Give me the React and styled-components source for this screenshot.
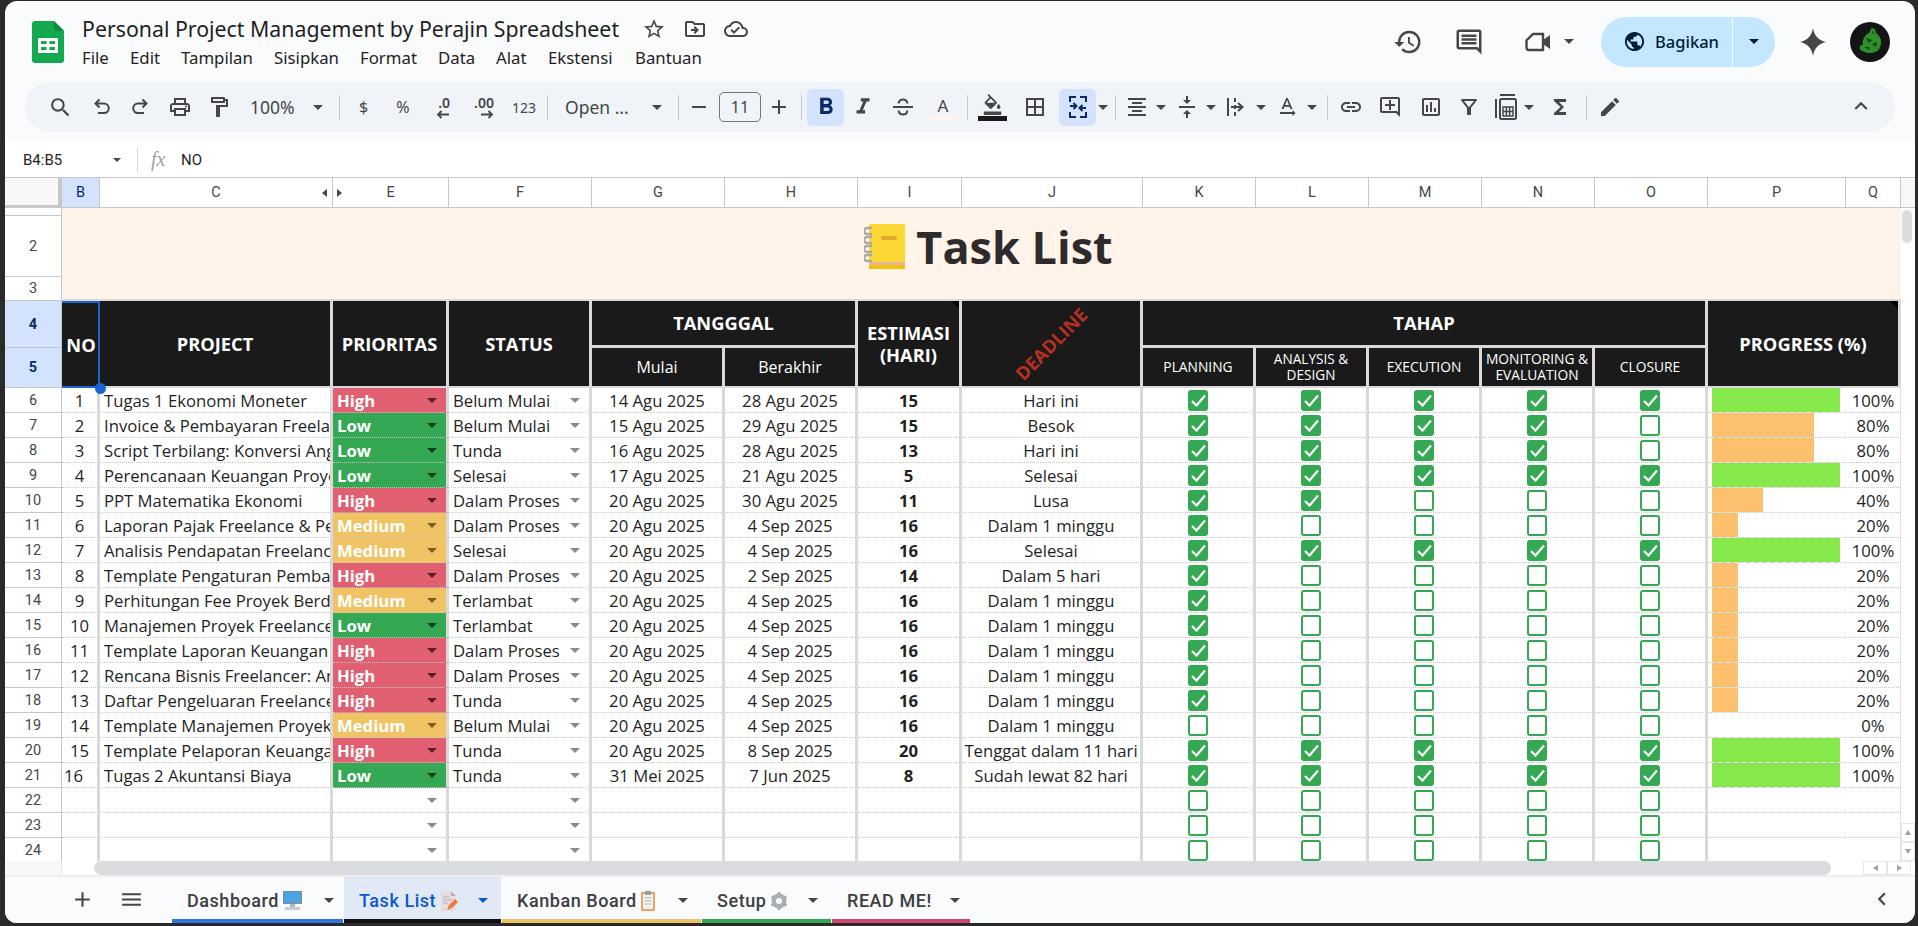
import React from "react";
import styled, {createGlobalStyle} from "styled-components";
import {
    MdSearch, MdOutlineLocalPrintshop, MdOutlineFormatPaint,
    MdRemove, MdAdd, MdFormatBold, MdFormatItalic, MdFormatColorFill, MdBorderAll,
    MdFormatAlignCenter, MdVerticalAlignCenter, MdTextRotationNone, MdLink, MdOutlineAddComment,
    MdOutlineInsertChart, MdOutlineFilterAlt, MdFunctions, MdEdit, MdKeyboardArrowUp, MdHistory,
    MdOutlineComment, MdPublic, MdStarBorder, MdOutlineDriveFileMove,
    MdOutlineCloudDone, MdMenu, MdChevronLeft
} from "react-icons/md";

const GlobalStyle = createGlobalStyle`
  html, body {
    margin: 0;
    padding: 0;
    background: #2a2a2a;
    overflow: hidden;
  }
  * {
    box-sizing: border-box;
  }
`;

const Frame = styled.div`
  width: 1918px;
  height: 926px;
  padding: 1px 3px 3px 5px;
  background: #2a2a2a;
`;

const Window = styled.div`
  width: 1910px;
  height: 922px;
  display: flex;
  flex-direction: column;
  background: #f9fbfd;
  border-radius: 12px;
  overflow: hidden;
  font-family: "Open Sans", sans-serif;
`;

const Header = styled.header`
  height: 81px;
  flex: none;
  display: flex;
  align-items: center;
  padding: 0 25px 0 27px;
`;

const TitleBlock = styled.div`
  margin-left: 18px;
  display: flex;
  flex-direction: column;
  gap: 2px;
`;

const DocRow = styled.div`
  display: flex;
  align-items: center;
  height: 30px;
`;

const DocName = styled.div`
  font-size: 21.3px;
  color: #1f1f1f;
  font-family: "Noto Sans", sans-serif;
  width: 551px;
  white-space: nowrap;
`;

const DocIcon = styled.span`
  width: 41px;
  display: flex;
  justify-content: center;
  font-size: 24px;
  color: #444746;
`;

const Menu = styled.nav`
  display: flex;
  height: 24px;
  align-items: center;
`;

const MenuItem = styled.span`
  font-family: "Noto Sans", sans-serif;
  font-size: 16.8px;
  color: #1f1f1f;
  width: ${({$w}) => $w}px;
  white-space: nowrap;
`;

const HeaderRight = styled.div`
  margin-left: auto;
  display: flex;
  align-items: center;
`;

const HeadIcon = styled.span`
  width: ${({$w}) => $w}px;
  display: flex;
  justify-content: center;
  font-size: 30px;
  color: #444746;
`;

const MeetGroup = styled.div`
  width: 74px;
  margin-right: 27px;
  padding-left: 25px;
  display: flex;
  align-items: center;
  gap: 13px;
`;

const Arrow = styled.span`
  flex: none;
  width: 0;
  height: 0;
  border-left: ${({$size}) => $size || 5}px solid transparent;
  border-right: ${({$size}) => $size || 5}px solid transparent;
  border-top: ${({$size}) => $size || 5}px solid ${({$color}) => $color || "#444746"};
`;

const Share = styled.div`
  width: 174px;
  height: 50px;
  display: flex;
  background: #c2e7ff;
  border-radius: 25px;
  color: #001d35;
`;

const ShareMain = styled.div`
  width: 132px;
  display: flex;
  align-items: center;
  gap: 9px;
  padding-left: 22px;
  font-family: "Noto Sans", sans-serif;
  font-size: 16.5px;
  font-weight: 500;
  border-right: 1.5px solid #f9fbfd;
  svg {
    font-size: 23px;
    flex: none;
  }
`;

const ShareDrop = styled.div`
  flex: 1;
  display: flex;
  align-items: center;
  justify-content: center;
`;

const Sparkle = styled.span`
  width: 75px;
  display: flex;
  justify-content: center;
`;

const Toolbar = styled.div`
  height: 50px;
  flex: none;
  margin: 0 20px;
  padding: 0 21px 0 12px;
  display: flex;
  align-items: center;
  background: #f0f4f9;
  border-radius: 25px;
`;

const Tool = styled.div`
  width: ${({$w}) => $w}px;
  height: 37px;
  flex: none;
  display: flex;
  align-items: center;
  justify-content: center;
  font-size: ${({$icon}) => $icon || 24}px;
  color: ${({$active}) => ($active ? "#0b2a6b" : "#444746")};
  background: ${({$active}) => ($active ? "#d3e3fd" : "transparent")};
  border-radius: ${({$active}) => ($active ? "5px" : "0")};
  position: relative;
`;

const ToolText = styled.span`
  font-family: "Noto Sans", sans-serif;
  font-size: ${({$size}) => $size || 17.5}px;
  color: #444746;
  white-space: nowrap;
`;

const TextTool = styled(Tool)`
  justify-content: space-between;
  padding: 0 11px 0 12px;
`;

const Sep = styled.span`
  width: 1px;
  height: 25px;
  flex: none;
  background: #c7c7c7;
  margin: 0 5px 0 ${({$ml}) => $ml || 5}px;
`;

const FontSize = styled.div`
  width: 42px;
  height: 30px;
  margin-left: 5px;
  flex: none;
  border: 1px solid #747775;
  border-radius: 5px;
  display: flex;
  align-items: center;
  justify-content: center;
  font-family: "Noto Sans", sans-serif;
  font-size: 16px;
  color: #444746;
`;

const ColorStack = styled.div`
  display: flex;
  flex-direction: column;
  align-items: center;
  font-size: 21px;
  svg {
    margin-bottom: 1px;
  }
`;

const ColorBar = styled.span`
  width: 29px;
  height: ${({$h}) => $h}px;
  background: ${({$color}) => $color};
`;

const LetterA = styled.span`
  font-family: "Noto Sans", sans-serif;
  font-size: 17px;
  line-height: 21px;
  color: #444746;
`;

const DecimalTool = styled.div`
  display: flex;
  flex-direction: column;
  align-items: flex-end;
  font-family: "Noto Sans", sans-serif;
  font-weight: 600;
  font-size: 14px;
  line-height: 14px;
  color: #444746;
`;

const FormulaBar = styled.div`
  height: 36px;
  flex: none;
  margin-top: 10px;
  display: flex;
  align-items: center;
  background: #fff;
  border-bottom: 1px solid #c7c7c7;
  padding-left: 18px;
`;

const NameBox = styled.div`
  width: 115px;
  padding-right: 16px;
  display: flex;
  align-items: center;
  justify-content: space-between;
  font-family: "Roboto", sans-serif;
  font-size: 15px;
  color: #1f1f1f;
  border-right: 1px solid #dadce0;
  height: 26px;
`;

const Fx = styled.span`
  margin-left: 13px;
  width: 30px;
  font-family: "Liberation Serif", serif;
  font-style: italic;
  font-size: 20px;
  color: #a0a0a0;
`;

const FormulaText = styled.span`
  font-family: "Roboto", sans-serif;
  font-size: 15px;
  color: #1f1f1f;
`;

const SheetArea = styled.div`
  height: 683px;
  flex: none;
  display: flex;
  background: #fff;
  overflow: hidden;
`;

const Sheet = styled.div`
  width: 1896px;
  height: 683px;
  flex: none;
  overflow: hidden;
  display: grid;
  grid-template-columns: 57px 38px 233px 116px 143px 133px 133px 104px 181px repeat(5, 113px) 138px 55px;
  grid-template-rows: 30px 8px 61px 24px 47px 40px repeat(19, 25px);
  color: #1f1f1f;
`;

const Corner = styled.div`
  background: #f8f8f8;
  border-right: 4px solid #c7c7c7;
  border-bottom: 3px solid #c7c7c7;
`;

const ColHead = styled.div`
  position: relative;
  display: flex;
  align-items: center;
  justify-content: center;
  font-family: "Roboto", sans-serif;
  font-size: 14.5px;
  color: ${({$active}) => ($active ? "#0b2a6b" : "#444746")};
  background: ${({$active}) => ($active ? "#d3e3fd" : "#fff")};
  border-right: 1px solid #c7c7c7;
  border-bottom: 1px solid #c7c7c7;
`;

const HiddenMark = styled.span`
  position: absolute;
  top: 50%;
  margin-top: -4px;
  ${({$side}) => ($side === "left" ? "right: 5px;" : "left: 4px;")}
  width: 0;
  height: 0;
  border-top: 4px solid transparent;
  border-bottom: 4px solid transparent;
  ${({$side}) => ($side === "left" ? "border-right: 5px solid #444746;" : "border-left: 5px solid #444746;")}
`;

const RowLabel = styled.div`
  grid-column: 1;
  display: flex;
  align-items: center;
  justify-content: center;
  font-family: "Roboto", sans-serif;
  font-size: 14.5px;
  font-weight: ${({$active}) => ($active ? 700 : 400)};
  color: ${({$active}) => ($active ? "#0b2a6b" : "#444746")};
  background: ${({$active}) => ($active ? "#d3e3fd" : "#fff")};
  border-right: 1px solid #c7c7c7;
  border-bottom: 1px solid #c7c7c7;
`;

const TitleCell = styled.div`
  grid-area: 2 / 2 / 5 / 17;
  display: flex;
  align-items: center;
  justify-content: center;
  gap: 11px;
  padding: 0 0 15px 14px;
  background: #fff3ea;
  border-bottom: 2px solid #d9d9d9;
`;

const TitleText = styled.h1`
  margin: 0;
  font-size: 45px;
  line-height: 1;
  font-weight: 700;
  color: #2f2b2c;
`;

const HeadCell = styled.div`
  grid-area: ${({$area}) => $area};
  position: relative;
  display: flex;
  align-items: center;
  justify-content: center;
  text-align: center;
  background: #1a1a1a;
  color: #fff;
  font-size: ${({$size}) => $size || 18.3}px;
  font-weight: ${({$light}) => ($light ? 400 : 700)};
  line-height: ${({$lh}) => $lh || 22}px;
  border-right: 3px solid #d9d9d9;
  border-bottom: ${({$bottom}) => $bottom || 2}px solid #d9d9d9;
  ${({$noted}) => $noted && `
    &::after {
      content: "";
      position: absolute;
      top: 0;
      right: 0;
      border-top: 8px solid #000;
      border-left: 8px solid transparent;
    }
  `}
`;

const SelectedHead = styled(HeadCell)`
  border-right: 0;
  border-bottom: 0;
  &::before {
    content: "";
    position: absolute;
    inset: 0;
    border: 2px solid #1a66d0;
    border-left: 0;
    pointer-events: none;
  }
  &::after {
    content: "";
    position: absolute;
    right: -6px;
    bottom: -6px;
    width: 11px;
    height: 11px;
    border-radius: 50%;
    background: #1a66d0;
    z-index: 2;
  }
`;

const DeadlineText = styled.span`
  display: block;
  color: #b7301f;
  font-size: 18.5px;
  font-weight: 700;
  transform: rotate(-45deg);
  white-space: nowrap;
`;

const Cell = styled.div`
  min-width: 0;
  display: flex;
  align-items: center;
  justify-content: ${({$align}) => $align || "flex-start"};
  font-size: 16.7px;
  white-space: nowrap;
  overflow: hidden;
  border-right: 3px solid #d9d9d9;
  border-bottom: 1px dotted #c9c9c9;
`;

const NoCell = styled(Cell)`
  justify-content: ${({$left}) => ($left ? "flex-start" : "center")};
  padding-left: ${({$left}) => ($left ? "2px" : "0")};
`;

const ProjectCell = styled(Cell)`
  padding-left: 4px;
`;

const PriorityCell = styled(Cell)`
  padding: 0 9px 0 4px;
  font-weight: 700;
  color: #fff;
  background: ${({$level}) => ({High: "#e06071", Low: "#34a853", Medium: "#f0c465"}[$level] || "#fff")};
`;

const StatusCell = styled(Cell)`
  padding: 0 9px 0 4px;
`;

const DropArrow = styled(Arrow)`
  margin-left: auto;
`;

const EstCell = styled(Cell)`
  justify-content: center;
  font-weight: 700;
`;

const CheckCell = styled(Cell)`
  justify-content: center;
`;

const CheckBox = styled.span`
  width: 20px;
  height: 21px;
  display: flex;
  align-items: center;
  justify-content: center;
  border-radius: 3px;
  border: 2.5px solid #34a853;
  background: ${({$on}) => ($on ? "#34a853" : "#fff")};
`;

const BarCell = styled.div`
  padding-left: 4px;
  border-bottom: 1px dotted #c9c9c9;
`;

const Bar = styled.div`
  width: ${({$pct}) => $pct * 1.28}px;
  height: 100%;
  background: ${({$pct}) => ($pct === 100 ? "#87e84b" : "#fdc06e")};
`;

const PctCell = styled.div`
  display: flex;
  align-items: center;
  justify-content: center;
  font-size: 16.7px;
  border-bottom: 1px dotted #c9c9c9;
  border-right: 1px solid #e0e0e0;
`;

const VScroll = styled.div`
  width: 14px;
  flex: 1;
  display: flex;
  flex-direction: column;
  background: #fff;
`;

const VGutterTop = styled.div`
  height: 30px;
  flex: none;
  background: #f8f8f8;
  border-bottom: 1px solid #c7c7c7;
`;

const VThumb = styled.div`
  width: 10px;
  height: 33px;
  margin: 2px 0 0 1px;
  border-radius: 5px;
  background: #dadce0;
`;

const ScrollBtns = styled.div`
  margin-top: auto;
  display: flex;
  flex-direction: ${({$row}) => ($row ? "row" : "column")};
`;

const ScrollBtn = styled.div`
  width: ${({$row}) => ($row ? "24px" : "14px")};
  height: ${({$row}) => ($row ? "14px" : "19px")};
  display: flex;
  align-items: center;
  justify-content: center;
  background: #fff;
  border: 1px solid #e6e6e6;
`;

const Tri = styled.span`
  width: 0;
  height: 0;
  ${({$dir}) => ($dir === "up" || $dir === "down"
    ? `border-left: 3px solid transparent; border-right: 3px solid transparent; border-${$dir === "up" ? "bottom" : "top"}: 5px solid #9aa0a6;`
    : `border-top: 3px solid transparent; border-bottom: 3px solid transparent; border-${$dir === "left" ? "right" : "left"}: 5px solid #9aa0a6;`)}
`;

const HScroll = styled.div`
  height: 16px;
  flex: none;
  display: flex;
  align-items: flex-start;
  background: #fff;
  border-bottom: 2px solid #eceef0;
`;

const HLeft = styled.div`
  width: 57px;
  height: 14px;
  flex: none;
  background: #f8f8f8;
  border-right: 1px solid #e6e6e6;
`;

const HThumb = styled.div`
  width: 1737px;
  height: 14px;
  margin-left: 32px;
  flex: none;
  border-radius: 7px;
  background: #dadce0;
`;

const HBtnGroup = styled(ScrollBtns)`
  margin: 0 0 0 32px;
`;

const TabBar = styled.footer`
  flex: 1;
  display: flex;
  align-items: stretch;
  padding: 0 20px 0 0;
  background: #f9fbfd;
`;

const TabTools = styled.div`
  width: 167px;
  flex: none;
  display: flex;
  align-items: center;
  padding: 0 0 2px 65px;
  gap: 24px;
  font-size: 25px;
  color: #444746;
`;

const Tab = styled.div`
  width: ${({$w}) => $w}px;
  flex: none;
  display: flex;
  align-items: center;
  gap: 4px;
  padding: 5px 0 0 ${({$pad}) => $pad}px;
  font-family: "Roboto", sans-serif;
  font-size: 18px;
  font-weight: 500;
  letter-spacing: 0.55px;
  color: ${({$active}) => ($active ? "#0b57d0" : "#3c4043")};
  background: ${({$active}) => ($active ? "#e1e9f7" : "transparent")};
  border-bottom: 4px solid ${({$color}) => $color};
  margin-right: 1px;
`;

const TabArrow = styled(Arrow)`
  margin-left: ${({$ml}) => $ml}px;
`;

const Collapse = styled.div`
  margin-left: auto;
  display: flex;
  align-items: center;
  padding-bottom: 2px;
  font-size: 26px;
  color: #444746;
`;

const SheetsLogo = () => (
    <svg width="32" height="42" viewBox="0 0 32 42">
        <path d="M3 0h19l10 10v29a3 3 0 0 1-3 3H3a3 3 0 0 1-3-3V3a3 3 0 0 1 3-3z" fill="#12a94f"/>
        <path d="M22 0l10 10h-7a3 3 0 0 1-3-3z" fill="#0c8a3e"/>
        <path d="M6 17h20v15H6z M9 20v3h5.5v-3z M17.5 20v3H23v-3z M9 26v3h5.5v-3z M17.5 26v3H23v-3z" fill="#fff" fillRule="evenodd"/>
    </svg>
);

const SparkleIcon = () => (
    <svg width="26" height="28" viewBox="0 0 26 28">
        <path d="M13 0c1.2 7.5 5 12 13 14-8 2-11.800 6.500-13 14C11.800 20.500 8 16 0 14 8 12 11.800 7.500 13 0z" fill="#444746"/>
    </svg>
);

const Avatar = () => (
    <svg width="40" height="40" viewBox="0 0 40 40">
        <circle cx="20" cy="20" r="20" fill="#141414"/>
        <path d="M22 6c3 0 4 3 4 5 3 2 5 5 5 9 0 5-2 9-6 10-4 2-9 1-13-1-2-1-3-3-2-5 1-1 2-1 3-1-1-3 0-7 3-10 1-1 3-2 4-3 0-2 1-4 2-4z" fill="#2f8f2a"/>
        <path d="M16 16l6 2-3 3zM22 22l5-2-1 5zM14 25l5 0 1 3zM22 9l2 1-1 3z" fill="#0f3d10"/>
    </svg>
);

const MeetIcon = () => (
    <svg width="26" height="20" viewBox="0 0 26 20" fill="none" stroke="#444746" strokeWidth="2.400">
        <path d="M8 2h10v16H4a2.500 2.500 0 0 1-2.500-2.500V8.500z"/>
        <path d="M18 8l7-5v14l-7-5z" fill="#444746" stroke="none"/>
    </svg>
);

const Notebook = () => (
    <svg width="41" height="45" viewBox="0 0 41 45">
        <rect x="5" y="0" width="36" height="45" fill="#fdd835"/>
        <rect x="5" y="38" width="36" height="3" fill="#e8b4a0"/>
        <rect x="5" y="41" width="36" height="4" fill="#f2c400"/>
        <rect x="17" y="12" width="16" height="4" rx="2" fill="#e0a92a"/>
        <g fill="none" stroke="#a8a8a8" strokeWidth="2.500">
            <path d="M8 4H3a2.500 2.500 0 0 0 0 6h5"/>
            <path d="M8 13H3a2.500 2.500 0 0 0 0 6h5"/>
            <path d="M8 22H3a2.500 2.500 0 0 0 0 6h5"/>
            <path d="M8 31H3a2.500 2.500 0 0 0 0 6h5"/>
        </g>
    </svg>
);

const UndoIcon = ({flip}) => (
    <svg width="18" height="20" viewBox="0 0 18 20" fill="none" stroke="#444746" strokeWidth="2"
         transform={flip ? "scale(-1 1)" : undefined}>
        <path d="M6.500 2.500L2.500 6.500l4 4M2.500 6.500H11a4.800 4.800 0 0 1 0 9.600H5"/>
    </svg>
);

const StrikeIcon = () => (
    <svg width="22" height="22" viewBox="0 0 22 22" fill="none" stroke="#444746" strokeWidth="2">
        <path d="M1 11h20M6.500 7.500C7 4.500 9 3.500 11 3.500s4 1 4.500 4M6.500 14.500c.5 3 2.500 4 4.500 4s4-1 4.500-4"/>
    </svg>
);

const MergeIcon = () => (
    <svg width="20" height="24" viewBox="0 0 20 24" fill="none" stroke="#0b2a6b" strokeWidth="2">
        <path d="M8 2H2v5M12 2h6v5M8 22H2v-5M12 22h6v-5"/>
        <path d="M2 11h6M5.500 8l3 3-3 3M18 13h-6M14.500 10l-3 3 3 3"/>
    </svg>
);

const WrapIcon = () => (
    <svg width="20" height="24" viewBox="0 0 20 24" fill="none" stroke="#444746" strokeWidth="2">
        <path d="M2 3v18M9 3v4M9 10v4M9 17v4M5 12h11M12 8l4.500 4-4.500 4"/>
    </svg>
);

const CalcIcon = () => (
    <svg width="24" height="26" viewBox="0 0 24 26" fill="none" stroke="#444746" strokeWidth="2">
        <path d="M7 1h15M3 5v19"/>
        <rect x="7" y="5" width="16" height="20" rx="1.500"/>
        <path d="M10 13h10v9H10zM10 17.500h10M13.300 13v9M16.600 13v9" strokeWidth="1.500"/>
    </svg>
);

const DecimalArrow = ({dir}) => (
    <svg width="14" height="9" viewBox="0 0 14 9" fill="none" stroke="#444746" strokeWidth="1.800">
        {dir === "left"
            ? <path d="M13 4.500H2M5.500 1L2 4.500 5.500 8"/>
            : <path d="M1 4.500h11M8.500 1L12 4.500 8.500 8"/>}
    </svg>
);

const CheckMark = () => (
    <svg width="15" height="13" viewBox="0 0 15 13" fill="none" stroke="#fff" strokeWidth="2.200">
        <path d="M1 7l4.500 4.500L14 1.500"/>
    </svg>
);

const MonitorEmoji = () => (
    <svg width="19" height="20" viewBox="0 0 19 20">
        <rect x="0" y="0" width="19" height="13" fill="#7a8b99"/>
        <rect x="1" y="1" width="17" height="11" fill="#4ba3e3"/>
        <rect x="7" y="13" width="5" height="3" fill="#b0b7bd"/>
        <rect x="2" y="16" width="15" height="3" fill="#c8cdd1"/>
    </svg>
);

const PageEmoji = () => (
    <svg width="18" height="20" viewBox="0 0 18 20">
        <path d="M1 0h10l5 5v15H1z" fill="#e6dce0"/>
        <path d="M11 0l5 5h-5z" fill="#b9aeb3"/>
        <path d="M3 6h6M3 9h9M3 12h5" stroke="#b9aeb3"/>
        <path d="M7 19l2-5 6-6 3 3-6 6z" fill="#ee7d3b"/>
    </svg>
);

const ClipboardEmoji = () => (
    <svg width="14" height="20" viewBox="0 0 14 20">
        <rect x="0" y="1" width="14" height="19" rx="1" fill="#e8a560"/>
        <rect x="2" y="3" width="10" height="15" fill="#f4f4f4"/>
        <rect x="4" y="0" width="6" height="4" fill="#9e9e9e"/>
        <path d="M3.500 7h7M3.500 10h7M3.500 13h7" stroke="#b0b0b0"/>
    </svg>
);

const GearEmoji = () => (
    <svg width="18" height="20" viewBox="0 0 18 20">
        <circle cx="9" cy="10" r="5.500" fill="none" stroke="#a8adb2" strokeWidth="4"/>
        <path d="M9 1v18M1.500 5.500l15 9M16.500 5.500l-15 9" stroke="#a8adb2" strokeWidth="3"/>
        <circle cx="9" cy="10" r="3" fill="#f9fbfd"/>
    </svg>
);

const columns = ["B", "C", "E", "F", "G", "H", "I", "J", "K", "L", "M", "N", "O", "P", "Q"];

const tasks = [
    ["Tugas 1 Ekonomi Moneter", "High", "Belum Mulai", "14 Agu 2025", "28 Agu 2025", 15, "Hari ini", 5, 100],
    ["Invoice & Pembayaran Freelance", "Low", "Belum Mulai", "15 Agu 2025", "29 Agu 2025", 15, "Besok", 4, 80],
    ["Script Terbilang: Konversi Angka", "Low", "Tunda", "16 Agu 2025", "28 Agu 2025", 13, "Hari ini", 4, 80],
    ["Perencanaan Keuangan Proyek", "Low", "Selesai", "17 Agu 2025", "21 Agu 2025", 5, "Selesai", 5, 100],
    ["PPT Matematika Ekonomi", "High", "Dalam Proses", "20 Agu 2025", "30 Agu 2025", 11, "Lusa", 2, 40],
    ["Laporan Pajak Freelance & Pekerja", "Medium", "Dalam Proses", "20 Agu 2025", "4 Sep 2025", 16, "Dalam 1 minggu", 1, 20],
    ["Analisis Pendapatan Freelancer", "Medium", "Selesai", "20 Agu 2025", "4 Sep 2025", 16, "Selesai", 5, 100],
    ["Template Pengaturan Pembayaran", "High", "Dalam Proses", "20 Agu 2025", "2 Sep 2025", 14, "Dalam 5 hari", 1, 20],
    ["Perhitungan Fee Proyek Berdasarkan", "Medium", "Terlambat", "20 Agu 2025", "4 Sep 2025", 16, "Dalam 1 minggu", 1, 20],
    ["Manajemen Proyek Freelance", "Low", "Terlambat", "20 Agu 2025", "4 Sep 2025", 16, "Dalam 1 minggu", 1, 20],
    ["Template Laporan Keuangan Freelance", "High", "Dalam Proses", "20 Agu 2025", "4 Sep 2025", 16, "Dalam 1 minggu", 1, 20],
    ["Rencana Bisnis Freelancer: Analisis", "High", "Dalam Proses", "20 Agu 2025", "4 Sep 2025", 16, "Dalam 1 minggu", 1, 20],
    ["Daftar Pengeluaran Freelancer", "High", "Tunda", "20 Agu 2025", "4 Sep 2025", 16, "Dalam 1 minggu", 1, 20],
    ["Template Manajemen Proyek", "Medium", "Belum Mulai", "20 Agu 2025", "4 Sep 2025", 16, "Dalam 1 minggu", 0, 0],
    ["Template Pelaporan Keuangan", "High", "Tunda", "20 Agu 2025", "8 Sep 2025", 20, "Tenggat dalam 11 hari", 5, 100],
    ["Tugas 2 Akuntansi Biaya", "Low", "Tunda", "31 Mei 2025", "7 Jun 2025", 8, "Sudah lewat 82 hari", 5, 100],
    ["", "", "", "", "", "", "", 0, null],
    ["", "", "", "", "", "", "", 0, null],
    ["", "", "", "", "", "", "", 0, null],
];

const priorityArrow = {High: "#5b1f25", Low: "#0f3c1c", Medium: "#7a5b2a"};

const stages = [0, 1, 2, 3, 4];

const App = () => {
    return (
        <Frame>
            <GlobalStyle/>
            <Window>
                <Header>
                    <SheetsLogo/>
                    <TitleBlock>
                        <DocRow>
                            <DocName>Personal Project Management by Perajin Spreadsheet</DocName>
                            <DocIcon><MdStarBorder/></DocIcon>
                            <DocIcon><MdOutlineDriveFileMove/></DocIcon>
                            <DocIcon><MdOutlineCloudDone/></DocIcon>
                        </DocRow>
                        <Menu>
                            <MenuItem $w={48}>File</MenuItem>
                            <MenuItem $w={51}>Edit</MenuItem>
                            <MenuItem $w={93}>Tampilan</MenuItem>
                            <MenuItem $w={86}>Sisipkan</MenuItem>
                            <MenuItem $w={78}>Format</MenuItem>
                            <MenuItem $w={58}>Data</MenuItem>
                            <MenuItem $w={52}>Alat</MenuItem>
                            <MenuItem $w={87}>Ekstensi</MenuItem>
                            <MenuItem $w={70}>Bantuan</MenuItem>
                        </Menu>
                    </TitleBlock>
                    <HeaderRight>
                        <HeadIcon $w={60}><MdHistory/></HeadIcon>
                        <HeadIcon $w={62}><MdOutlineComment/></HeadIcon>
                        <MeetGroup><MeetIcon/><Arrow/></MeetGroup>
                        <Share>
                            <ShareMain><MdPublic/>Bagikan</ShareMain>
                            <ShareDrop><Arrow $color="#001d35"/></ShareDrop>
                        </Share>
                        <Sparkle><SparkleIcon/></Sparkle>
                        <Avatar/>
                    </HeaderRight>
                </Header>

                <Toolbar>
                    <Tool $w={46} $icon={25}><MdSearch/></Tool>
                    <Tool $w={38}><UndoIcon/></Tool>
                    <Tool $w={38}><UndoIcon flip/></Tool>
                    <Tool $w={41}><MdOutlineLocalPrintshop/></Tool>
                    <Tool $w={38}><MdOutlineFormatPaint/></Tool>
                    <TextTool $w={96}><ToolText>100%</ToolText><Arrow/></TextTool>
                    <Sep/>
                    <Tool $w={37}><ToolText $size={16}>$</ToolText></Tool>
                    <Tool $w={42}><ToolText $size={16}>%</ToolText></Tool>
                    <Tool $w={38}>
                        <DecimalTool>.0<DecimalArrow dir="left"/></DecimalTool>
                    </Tool>
                    <Tool $w={44}>
                        <DecimalTool>.00<DecimalArrow dir="right"/></DecimalTool>
                    </Tool>
                    <Tool $w={36}><ToolText $size={14}>123</ToolText></Tool>
                    <Sep/>
                    <TextTool $w={120}><ToolText>Open ...</ToolText><Arrow/></TextTool>
                    <Sep/>
                    <Tool $w={30}><MdRemove/></Tool>
                    <FontSize>11</FontSize>
                    <Tool $w={35}><MdAdd/></Tool>
                    <Sep/>
                    <Tool $w={37} $active $icon={28}><MdFormatBold/></Tool>
                    <Tool $w={38} $icon={26}><MdFormatItalic/></Tool>
                    <Tool $w={42}><StrikeIcon/></Tool>
                    <Tool $w={38}>
                        <ColorStack><LetterA>A</LetterA><ColorBar $h={4} $color="#fff3ea"/></ColorStack>
                    </Tool>
                    <Sep/>
                    <Tool $w={38}>
                        <ColorStack><MdFormatColorFill/><ColorBar $h={5} $color="#1a1a1a"/></ColorStack>
                    </Tool>
                    <Tool $w={48}><MdBorderAll/></Tool>
                    <Tool $w={37} $active><MergeIcon/></Tool>
                    <Tool $w={14}><Arrow/></Tool>
                    <Sep/>
                    <Tool $w={32}><MdFormatAlignCenter/></Tool>
                    <Tool $w={16}><Arrow/></Tool>
                    <Tool $w={36}><MdVerticalAlignCenter/></Tool>
                    <Tool $w={12}><Arrow/></Tool>
                    <Tool $w={38}><WrapIcon/></Tool>
                    <Tool $w={12}><Arrow/></Tool>
                    <Tool $w={40}><MdTextRotationNone/></Tool>
                    <Tool $w={10}><Arrow/></Tool>
                    <Sep $ml={10}/>
                    <Tool $w={36}><MdLink/></Tool>
                    <Tool $w={42}><MdOutlineAddComment/></Tool>
                    <Tool $w={40}><MdOutlineInsertChart/></Tool>
                    <Tool $w={36}><MdOutlineFilterAlt/></Tool>
                    <Tool $w={36}><CalcIcon/></Tool>
                    <Tool $w={12}><Arrow/></Tool>
                    <Tool $w={50}><MdFunctions/></Tool>
                    <Sep $ml={1}/>
                    <Tool $w={36}><MdEdit/></Tool>
                    <Collapse><MdKeyboardArrowUp/></Collapse>
                </Toolbar>

                <FormulaBar>
                    <NameBox>B4:B5<Arrow $size={4}/></NameBox>
                    <Fx>fx</Fx>
                    <FormulaText>NO</FormulaText>
                </FormulaBar>

                <SheetArea>
                    <Sheet>
                        <Corner/>
                        {columns.map((col) => (
                            <ColHead key={col} $active={col === "B"}>
                                {col}
                                {col === "C" && <HiddenMark $side="left"/>}
                                {col === "E" && <HiddenMark $side="right"/>}
                            </ColHead>
                        ))}

                        <TitleCell>
                            <Notebook/>
                            <TitleText>Task List</TitleText>
                        </TitleCell>
                        <SelectedHead $area="5 / 2 / 7 / 3">NO</SelectedHead>
                        <HeadCell $area="5 / 3 / 7 / 4">PROJECT</HeadCell>
                        <HeadCell $area="5 / 4 / 7 / 5">PRIORITAS</HeadCell>
                        <HeadCell $area="5 / 5 / 7 / 6">STATUS</HeadCell>
                        <HeadCell $area="5 / 6 / 6 / 8" $bottom={3}>TANGGGAL</HeadCell>
                        <HeadCell $area="6 / 6 / 7 / 7" $light $size={16}>Mulai</HeadCell>
                        <HeadCell $area="6 / 7 / 7 / 8" $light $size={16}>Berakhir</HeadCell>
                        <HeadCell $area="5 / 8 / 7 / 9" $noted>ESTIMASI<br/>(HARI)</HeadCell>
                        <HeadCell $area="5 / 9 / 7 / 10"><DeadlineText>DEADLINE</DeadlineText></HeadCell>
                        <HeadCell $area="5 / 10 / 6 / 15" $bottom={3}>TAHAP</HeadCell>
                        <HeadCell $area="6 / 10 / 7 / 11" $light $size={13.8} $lh={16}>PLANNING</HeadCell>
                        <HeadCell $area="6 / 11 / 7 / 12" $light $size={13.6} $lh={16}>ANALYSIS &amp;<br/>DESIGN</HeadCell>
                        <HeadCell $area="6 / 12 / 7 / 13" $light $size={13.8} $lh={16}>EXECUTION</HeadCell>
                        <HeadCell $area="6 / 13 / 7 / 14" $light $size={13.8} $lh={16}>MONITORING &amp;<br/>EVALUATION</HeadCell>
                        <HeadCell $area="6 / 14 / 7 / 15" $light $size={13.8} $lh={16}>CLOSURE</HeadCell>
                        <HeadCell $area="5 / 15 / 7 / 17" $noted>PROGRESS (%)</HeadCell>

                        <RowLabel/>
                        <RowLabel>2</RowLabel>
                        <RowLabel>3</RowLabel>
                        <RowLabel $active>4</RowLabel>
                        <RowLabel $active>5</RowLabel>

                        {tasks.map((task, index) => {
                            const [project, priority, status, start, end, estimate, deadline, done, progress] = task;
                            return (
                                <React.Fragment key={index}>
                                    <RowLabel>{index + 6}</RowLabel>
                                    <NoCell $left={index === 15}>{project ? index + 1 : ""}</NoCell>
                                    <ProjectCell>{project}</ProjectCell>
                                    <PriorityCell $level={priority}>
                                        {priority}
                                        <DropArrow $color={priorityArrow[priority] || "#8a8a8a"}/>
                                    </PriorityCell>
                                    <StatusCell>
                                        {status}
                                        <DropArrow $color="#8a8a8a"/>
                                    </StatusCell>
                                    <Cell $align="center">{start}</Cell>
                                    <Cell $align="center">{end}</Cell>
                                    <EstCell>{estimate}</EstCell>
                                    <Cell $align="center">{deadline}</Cell>
                                    {stages.map((stage) => (
                                        <CheckCell key={stage}>
                                            <CheckBox $on={stage < done}>
                                                {stage < done && <CheckMark/>}
                                            </CheckBox>
                                        </CheckCell>
                                    ))}
                                    <BarCell>{progress > 0 && <Bar $pct={progress}/>}</BarCell>
                                    <PctCell>{progress === null ? "" : `${progress}%`}</PctCell>
                                </React.Fragment>
                            );
                        })}
                    </Sheet>
                    <VScroll>
                        <VGutterTop/>
                        <VThumb/>
                        <ScrollBtns>
                            <ScrollBtn><Tri $dir="up"/></ScrollBtn>
                            <ScrollBtn><Tri $dir="down"/></ScrollBtn>
                        </ScrollBtns>
                    </VScroll>
                </SheetArea>

                <HScroll>
                    <HLeft/>
                    <HThumb/>
                    <HBtnGroup $row>
                        <ScrollBtn $row><Tri $dir="left"/></ScrollBtn>
                        <ScrollBtn $row><Tri $dir="right"/></ScrollBtn>
                    </HBtnGroup>
                </HScroll>

                <TabBar>
                    <TabTools><MdAdd/><MdMenu/></TabTools>
                    <Tab $w={171} $pad={15} $color="#3078de">
                        Dashboard<MonitorEmoji/>
                        <TabArrow $ml={18}/>
                    </Tab>
                    <Tab $w={157} $pad={15} $active $color="#111">
                        Task List<PageEmoji/>
                        <TabArrow $ml={16} $color="#0b57d0"/>
                    </Tab>
                    <Tab $w={199} $pad={15} $color="#efc364">
                        Kanban Board<ClipboardEmoji/>
                        <TabArrow $ml={19}/>
                    </Tab>
                    <Tab $w={129} $pad={15} $color="#34a853">
                        Setup<GearEmoji/>
                        <TabArrow $ml={16}/>
                    </Tab>
                    <Tab $w={138} $pad={15} $color="#cf4771">
                        READ ME!
                        <TabArrow $ml={14}/>
                    </Tab>
                    <Collapse><MdChevronLeft/></Collapse>
                </TabBar>
            </Window>
        </Frame>
    );
};

export default App;
